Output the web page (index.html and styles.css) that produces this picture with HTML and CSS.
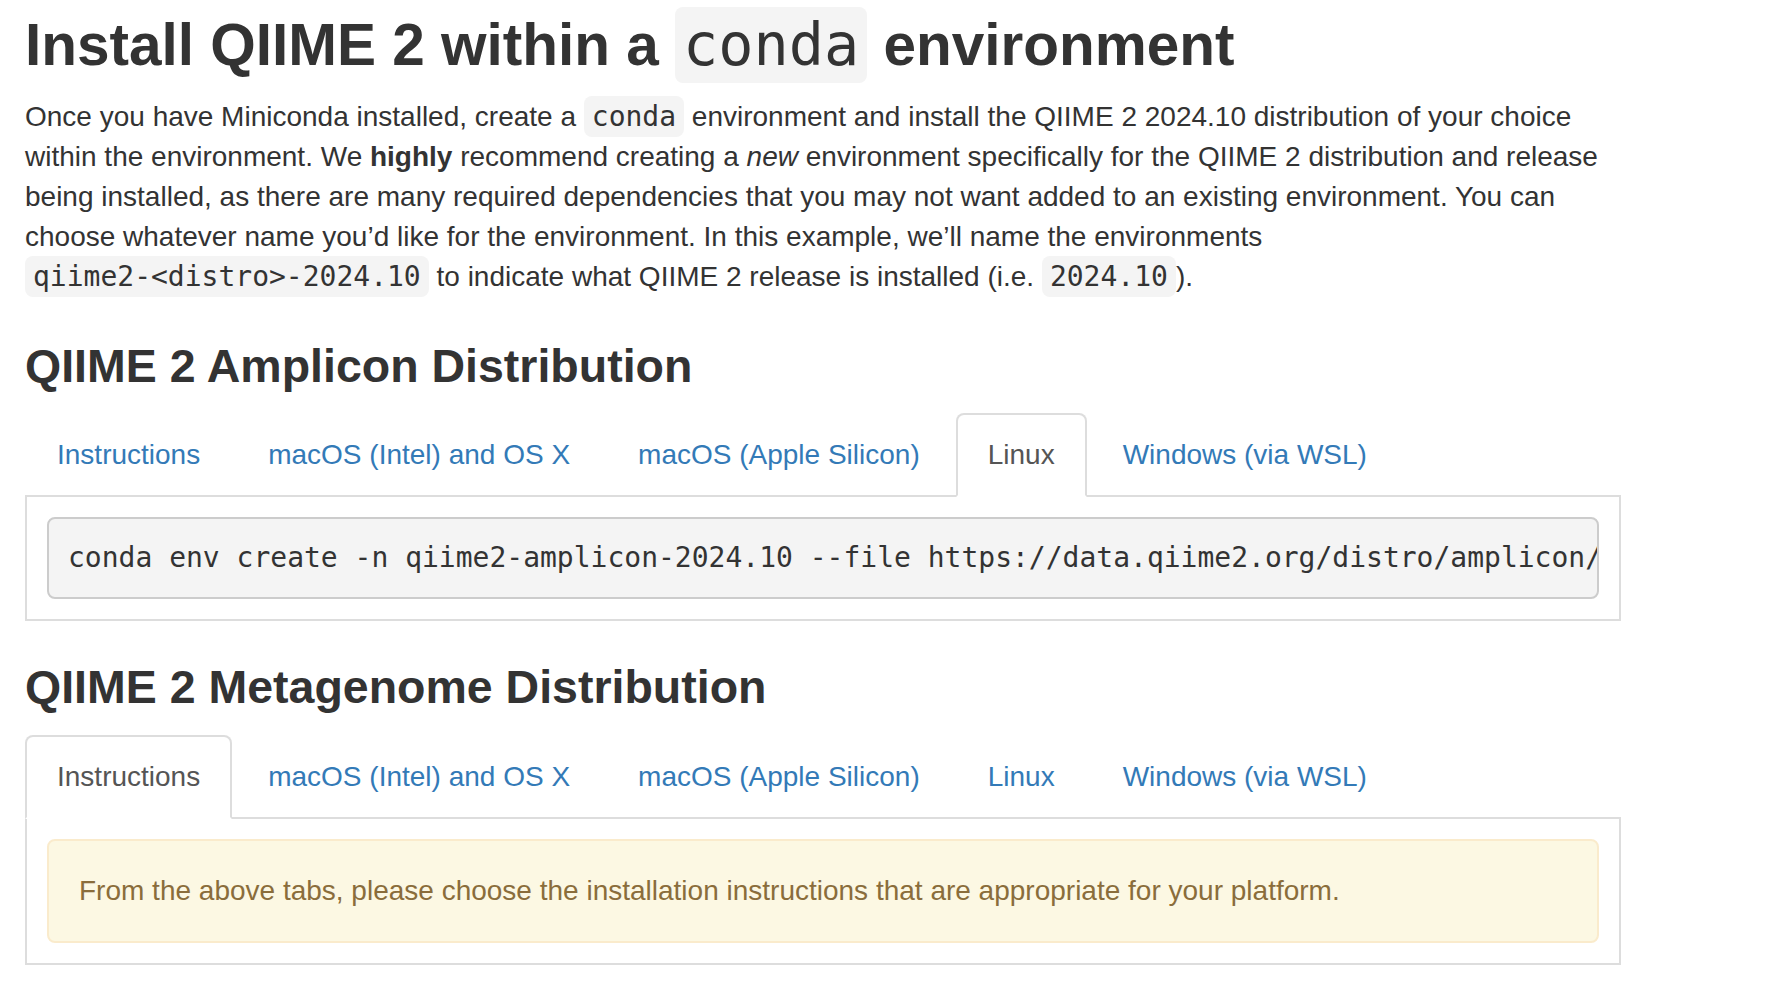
FILE: index.html
```html
<!DOCTYPE html>
<html lang="en">
<head>
<meta charset="utf-8">
<title>Install QIIME 2 within a conda environment</title>
<link rel="stylesheet" href="styles.css">
</head>
<body>
<main class="page">
  <h1 class="title">Install QIIME 2 within a <code class="code">conda</code> environment</h1>
  <p class="lead">Once you have Miniconda installed, create a <code class="code">conda</code> environment and install the QIIME 2 2024.10 distribution of your choice within the environment. We <strong>highly</strong> recommend creating a <em>new</em> environment specifically for the QIIME 2 distribution and release being installed, as there are many required dependencies that you may not want added to an existing environment. You can choose whatever name you’d like for the environment. In this example, we’ll name the environments <code class="code">qiime2-&lt;distro&gt;-2024.10</code> to indicate what QIIME 2 release is installed (i.e. <code class="code">2024.10</code>).</p>

  <section class="dist">
    <h2 class="subtitle">QIIME 2 Amplicon Distribution</h2>
    <ul class="tabs">
      <li class="tab"><a class="tab-link" href="#">Instructions</a></li>
      <li class="tab"><a class="tab-link" href="#">macOS (Intel) and OS X</a></li>
      <li class="tab"><a class="tab-link" href="#">macOS (Apple Silicon)</a></li>
      <li class="tab"><a class="tab-link active" href="#">Linux</a></li>
      <li class="tab"><a class="tab-link" href="#">Windows (via WSL)</a></li>
    </ul>
    <div class="tab-panel">
      <pre class="cmd">conda env create -n qiime2-amplicon-2024.10 --file https://data.qiime2.org/distro/amplicon/qiime2-amplicon-2024.10-py310-linux-conda.yml</pre>
    </div>
  </section>

  <section class="dist">
    <h2 class="subtitle">QIIME 2 Metagenome Distribution</h2>
    <ul class="tabs">
      <li class="tab"><a class="tab-link active" href="#">Instructions</a></li>
      <li class="tab"><a class="tab-link" href="#">macOS (Intel) and OS X</a></li>
      <li class="tab"><a class="tab-link" href="#">macOS (Apple Silicon)</a></li>
      <li class="tab"><a class="tab-link" href="#">Linux</a></li>
      <li class="tab"><a class="tab-link" href="#">Windows (via WSL)</a></li>
    </ul>
    <div class="tab-panel">
      <div class="alert">From the above tabs, please choose the installation instructions that are appropriate for your platform.</div>
    </div>
  </section>
</main>
</body>
</html>
```

FILE: styles.css
```css
html, body {
  margin: 0;
  padding: 0;
  background: #fff;
}

body {
  font-family: "Liberation Sans", Arial, Helvetica, sans-serif;
  font-size: 28px;
  line-height: 40px;
  color: #333;
}

.page {
  width: 1596px;
  margin-left: 25px;
  padding-top: 13px;
}

.title {
  margin: 0 0 20px;
  font-size: 58.5px;
  line-height: 1.1;
  font-weight: 700;
}

.code {
  font-family: "DejaVu Sans Mono", "Liberation Mono", monospace;
  font-size: 1em;
  font-weight: 400;
  padding: 4px 8px;
  background: #f4f4f4;
  color: #333;
  border-radius: 8px;
  white-space: nowrap;
}

.lead {
  margin: 0;
}

.subtitle {
  margin: 44px 0 21px;
  font-size: 46.5px;
  line-height: 1.1;
  font-weight: 700;
}

.dist + .dist .subtitle {
  margin-top: 41px;
}

.tabs {
  list-style: none;
  margin: 0;
  padding: 0;
  display: flex;
  border-bottom: 2px solid #ddd;
}

.tab {
  margin-bottom: -2px;
}

.tab-link {
  display: block;
  margin-right: 4px;
  padding: 20px 30px;
  border: 2px solid transparent;
  border-radius: 8px 8px 0 0;
  color: #337ab7;
  text-decoration: none;
  line-height: 40px;
}

.tab-link.active {
  color: #555;
  background: #fff;
  border-color: #ddd;
  border-bottom-color: transparent;
}

.tab-panel {
  border: 2px solid #ddd;
  border-top: none;
  padding: 20px;
}

.cmd {
  margin: 0;
  padding: 19px;
  font-family: "DejaVu Sans Mono", "Liberation Mono", monospace;
  font-size: 28px;
  line-height: 40px;
  color: #333;
  background: #f4f4f4;
  border: 2px solid #ccc;
  border-radius: 8px;
  white-space: pre;
  overflow: hidden;
}

.alert {
  padding: 30px;
  border: 2px solid #faebcc;
  border-radius: 8px;
  background: #fcf8e3;
  color: #8a6d3b;
}
```
